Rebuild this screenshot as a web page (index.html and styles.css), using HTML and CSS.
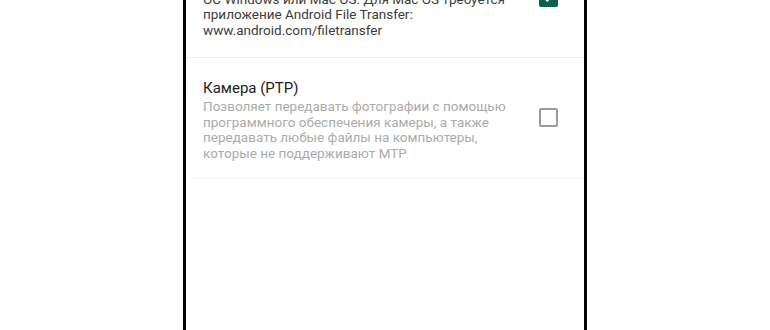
FILE: index.html
```html
<!DOCTYPE html>
<html lang="ru">
<head>
<meta charset="utf-8">
<link rel="stylesheet" href="styles.css">
</head>
<body>
<div class="phone">
  <div class="list">
    <div class="item item-active">
      <div class="text">
        <div class="title">Медиа-устройство (MTP)</div>
        <div class="desc">Позволяет передавать медиафайлы в<br>ОС Windows или Mac OS. Для Mac OS требуется<br>приложение Android File Transfer:<br>www.android.com/filetransfer</div>
      </div>
      <div class="check checked">
        <svg viewBox="0 0 18 18" width="18" height="18"><path d="M4 9.2l3.3 3.3L14 5.8" fill="none" stroke="#fff" stroke-width="2.2"/></svg>
      </div>
    </div>
    <div class="item item-dim">
      <div class="text">
        <div class="title">Камера (PTP)</div>
        <div class="desc">Позволяет передавать фотографии с помощью<br>программного обеспечения камеры, а также<br>передавать любые файлы на компьютеры,<br>которые не поддерживают MTP</div>
      </div>
      <div class="check"></div>
    </div>
  </div>
</div>
</body>
</html>
```
FILE: styles.css
```css
html, body {
  margin: 0;
  padding: 0;
  background: #fff;
}
body {
  height: 330px;
  overflow: hidden;
  font-family: Roboto, "Noto Sans", sans-serif;
}
.phone {
  width: 398px;
  height: 330px;
  margin: 0 auto;
  border-left: 3px solid #000;
  border-right: 3px solid #000;
  background: #fff;
  overflow: hidden;
}
.list {
  margin-top: -65px;
}
.item {
  display: flex;
  align-items: center;
  padding: 19px 26px 16px 17px;
  border-bottom: 1px solid #ececec;
}
.item-active {
  padding-bottom: 18px;
}
.item-dim {
  border-bottom-color: #f4f4f4;
  margin-left: 4px;
  padding-left: 13px;
}
.text {
  flex: 1;
}
.title {
  font-size: 15px;
  line-height: 22px;
  color: #222;
}
.desc {
  font-size: 13.5px;
  line-height: 15.7px;
}
.item-active .desc {
  color: #3d3d3d;
}
.item-dim .desc {
  color: #ababab;
}
.check {
  width: 15px;
  height: 15px;
  border: 2px solid #9a9a9a;
  border-radius: 2px;
  margin-top: -3px;
  flex: none;
}
.check.checked {
  width: 19px;
  height: 19px;
  border: none;
  background: #0e5e50;
  margin-top: 2px;
}
.check svg {
  display: block;
  margin: 0.5px;
}
```
